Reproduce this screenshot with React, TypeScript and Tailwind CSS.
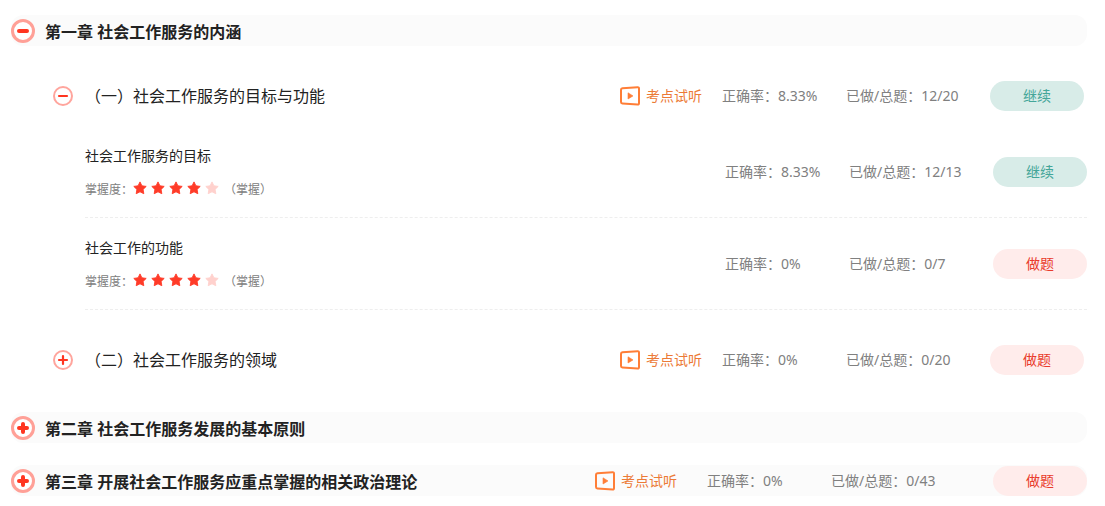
import { useState } from 'react';
import clsx from 'clsx';

type Progress = { rate: string; done: number; total: number };
type Leaf = Progress & { title: string; stars: number; level: string };
type Section = Progress & { title: string; leaves: Leaf[] };
type Chapter = { title: string; progress?: Progress; sections: Section[] };

const chapters: Chapter[] = [
  {
    title: '第一章 社会工作服务的内涵',
    sections: [
      {
        title: '（一）社会工作服务的目标与功能',
        rate: '8.33%',
        done: 12,
        total: 20,
        leaves: [
          { title: '社会工作服务的目标', stars: 4, level: '掌握', rate: '8.33%', done: 12, total: 13 },
          { title: '社会工作的功能', stars: 4, level: '掌握', rate: '0%', done: 0, total: 7 },
        ],
      },
      { title: '（二）社会工作服务的领域', rate: '0%', done: 0, total: 20, leaves: [] },
    ],
  },
  { title: '第二章 社会工作服务发展的基本原则', sections: [] },
  {
    title: '第三章 开展社会工作服务应重点掌握的相关政治理论',
    progress: { rate: '0%', done: 0, total: 43 },
    sections: [],
  },
];

function ToggleIcon({ open, large }: { open: boolean; large?: boolean }) {
  if (large) {
    return (
      <svg className="size-6 shrink-0" viewBox="0 0 24 24" fill="none" aria-hidden="true">
        <circle cx="12" cy="12" r="10.5" fill="#fff" stroke="#ffa097" strokeWidth="3" />
        <path
          d={open ? 'M8 12h8' : 'M8 12h8M12 8v8'}
          stroke="#ff3520"
          strokeWidth="4"
          strokeLinecap="round"
        />
      </svg>
    );
  }
  return (
    <svg className="size-5 shrink-0" viewBox="0 0 20 20" fill="none" aria-hidden="true">
      <circle cx="10" cy="10" r="9" stroke="#ffa59d" strokeWidth="2" />
      <path
        d={open ? 'M6 10h8' : 'M6 10h8M10 6v8'}
        stroke="#ff3520"
        strokeWidth="2.2"
        strokeLinecap="round"
      />
    </svg>
  );
}

function Star({ filled }: { filled: boolean }) {
  return (
    <svg
      className={clsx('size-3.5', filled ? 'text-[#ff3b28]' : 'text-[#ffd1cd]')}
      viewBox="0 0 14 14"
      aria-hidden="true"
    >
      <path
        d="M7 .9 8.9 4.8 13.2 5.4 10.1 8.4 10.8 12.7 7 10.8 3.2 12.7 3.9 8.4 .8 5.4 5.1 4.8Z"
        fill="currentColor"
        stroke="currentColor"
        strokeWidth=".9"
        strokeLinejoin="round"
      />
    </svg>
  );
}

function AuditionLink() {
  return (
    <a href="#audition" className="flex shrink-0 items-center gap-[6px] text-[#ec7a36]">
      <svg className="size-5" viewBox="0 0 20 20" fill="none" aria-hidden="true">
        <path
          d="M2.4 2.3 17.6 1.2Q19 1.1 19 2.5V17.3Q19 18.7 17.6 18.6L2.4 17.5Q1 17.4 1 16V3.7Q1 2.4 2.4 2.3Z"
          stroke="#ff7e37"
          strokeWidth="2"
        />
        <path d="M8 6.8 13 9.9 8 13Z" fill="#ff7e37" stroke="#ff7e37" strokeWidth=".6" strokeLinejoin="round" />
      </svg>
      考点试听
    </a>
  );
}

function ProgressCells({ rate, done, total, wide }: Progress & { wide?: boolean }) {
  const started = done > 0;
  return (
    <div className="flex shrink-0 items-center text-[#808080]">
      <span className="w-[124px]">正确率：{rate}</span>
      <span className={wide ? 'w-[162px]' : 'w-36'}>
        已做/总题：{done}/{total}
      </span>
      <button
        type="button"
        className={clsx(
          'h-[30px] w-[94px] cursor-pointer rounded-full',
          started ? 'bg-[#d8ece8] text-[#44a699]' : 'bg-[#ffeceb] text-[#e93b2b]'
        )}
      >
        {started ? '继续' : '做题'}
      </button>
    </div>
  );
}

function LeafRow({ leaf }: { leaf: Leaf }) {
  return (
    <li className="flex h-[92px] items-center justify-between border-b border-dashed border-[#eeeeee]">
      <div className="flex flex-col gap-[14px] pt-[2px]">
        <h4 className="leading-5 text-[#222222]">{leaf.title}</h4>
        <div className="flex h-5 items-center text-xs text-[#808080]">
          <span className="w-12">掌握度：</span>
          <span
            className="mb-1 flex w-[91px] gap-1"
            role="img"
            aria-label={`${leaf.stars}/5`}
          >
            {[1, 2, 3, 4, 5].map((n) => (
              <Star key={n} filled={n <= leaf.stars} />
            ))}
          </span>
          <span>（{leaf.level}）</span>
        </div>
      </div>
      <ProgressCells {...leaf} />
    </li>
  );
}

function SectionBlock({ section }: { section: Section }) {
  const [open, setOpen] = useState(section.leaves.length > 0);

  return (
    <section className="pt-5 pl-[42px]">
      <div className="flex h-[60px] items-center justify-between pr-[3px]">
        <button
          type="button"
          aria-expanded={open}
          onClick={() => setOpen(!open)}
          className="flex cursor-pointer items-center gap-3 text-base text-[#222222]"
        >
          <ToggleIcon open={open} />
          {section.title}
        </button>
        <div className="flex items-center gap-5">
          <AuditionLink />
          <ProgressCells {...section} />
        </div>
      </div>
      {open && section.leaves.length > 0 && (
        <ul className="pl-8">
          {section.leaves.map((leaf) => (
            <LeafRow key={leaf.title} leaf={leaf} />
          ))}
        </ul>
      )}
    </section>
  );
}

function ChapterBlock({ chapter }: { chapter: Chapter }) {
  const [open, setOpen] = useState(chapter.sections.length > 0);

  return (
    <section>
      <div className="flex h-[31px] items-center justify-between rounded-xl bg-[#fbfbfb]">
        <button
          type="button"
          aria-expanded={open}
          onClick={() => setOpen(!open)}
          className="flex cursor-pointer items-center gap-[10px] text-base font-bold text-[#222222]"
        >
          <ToggleIcon open={open} large />
          <span className="pt-[2px]">{chapter.title}</span>
        </button>
        {chapter.progress && (
          <div className="flex items-center gap-[30px]">
            <AuditionLink />
            <ProgressCells {...chapter.progress} wide />
          </div>
        )}
      </div>
      {open && chapter.sections.map((section) => <SectionBlock key={section.title} section={section} />)}
    </section>
  );
}

export default function App() {
  return (
    <main
      lang="zh-CN"
      className="flex min-h-screen flex-col gap-[22px] bg-white pt-[15px] pr-[18px] pl-[11px] font-['Noto_Sans','Noto_Sans_CJK_SC',sans-serif] text-sm"
    >
      {chapters.map((chapter) => (
        <ChapterBlock key={chapter.title} chapter={chapter} />
      ))}
    </main>
  );
}
